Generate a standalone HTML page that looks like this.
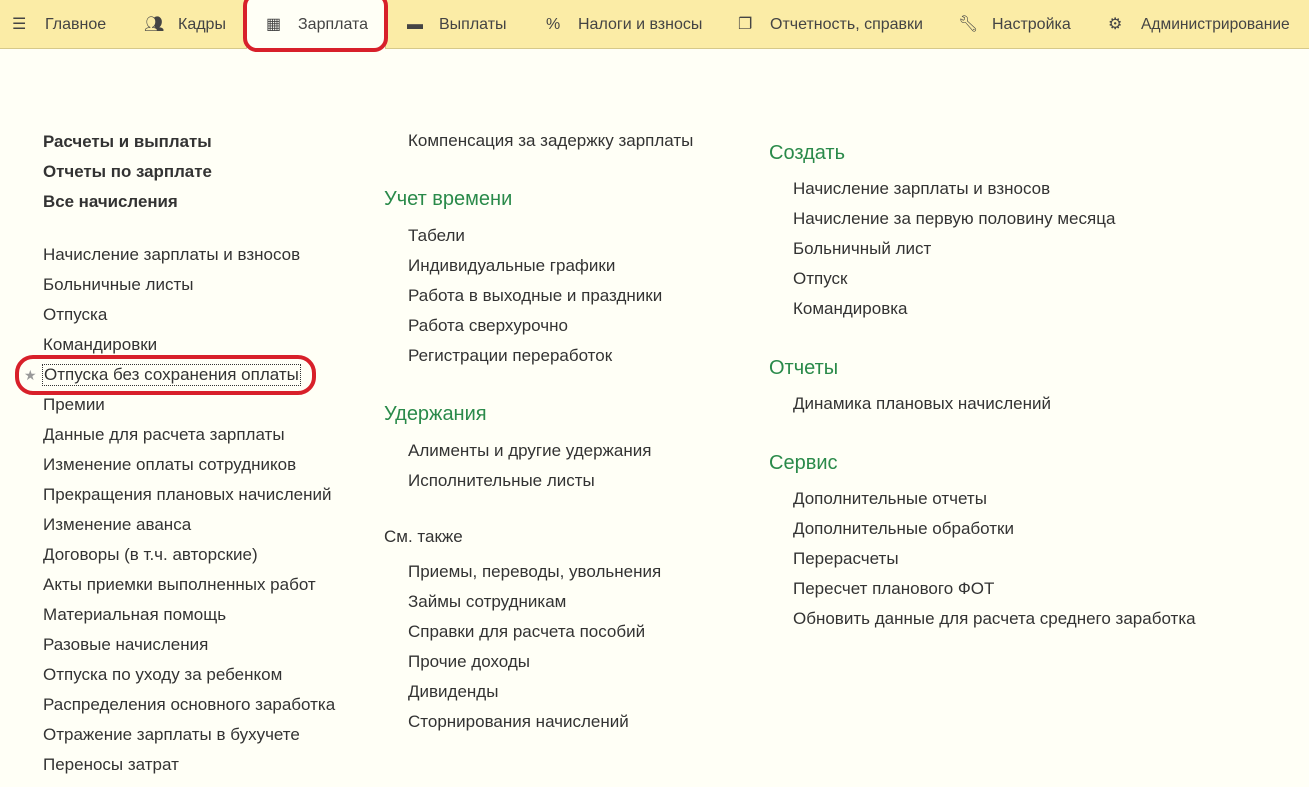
<!DOCTYPE html>
<html><head><meta charset="utf-8"><style>
body{margin:0;width:1309px;height:787px;background:#fffff6;font-family:"Liberation Sans",sans-serif;color:#333;overflow:hidden;position:relative}
.bar{position:absolute;left:0;top:0;width:1309px;height:48px;background:#fbeca6;border-bottom:1px solid #d6c98a}
.tab{position:absolute;top:1px;height:48px;line-height:48px;font-size:16px;color:#444}
.sel{position:absolute;left:246px;top:0;width:138px;height:49px;background:#fffff6;border-left:1px solid #d6c98a;border-right:1px solid #d6c98a}
.redbox{position:absolute;border:4px solid #d8202a;border-radius:14px}
.t{position:absolute;font-size:17px;white-space:nowrap;color:#333}
.b{font-weight:bold;font-size:16.9px}
.g{position:absolute;font-size:20px;color:#2a8a4a;white-space:nowrap}
</style></head><body>
<div class="bar"></div>
<div class="sel"></div>
<div class="redbox" style="left:243px;top:-8px;width:137px;height:52px"></div>
<div class="tab" style="left:12px">☰</div><div class="tab" style="left:45px">Главное</div>
<div class="tab" style="left:144px">👥︎</div><div class="tab" style="left:178px">Кадры</div>
<div class="tab" style="left:266px">▦</div><div class="tab" style="left:298px">Зарплата</div>
<div class="tab" style="left:407px">▬</div><div class="tab" style="left:439px">Выплаты</div>
<div class="tab" style="left:546px">%</div><div class="tab" style="left:578px">Налоги и взносы</div>
<div class="tab" style="left:738px">❐</div><div class="tab" style="left:770px">Отчетность, справки</div>
<div class="tab" style="left:958px">🔧︎</div><div class="tab" style="left:992px">Настройка</div>
<div class="tab" style="left:1108px">⚙</div><div class="tab" style="left:1141px;font-size:15.6px">Администрирование</div>

<div class="t b" style="left:43px;top:132px">Расчеты и выплаты</div>
<div class="t b" style="left:43px;top:162px">Отчеты по зарплате</div>
<div class="t b" style="left:43px;top:192px">Все начисления</div>
<div class="t" style="left:43px;top:245px">Начисление зарплаты и взносов</div>
<div class="t" style="left:43px;top:275px">Больничные листы</div>
<div class="t" style="left:43px;top:305px">Отпуска</div>
<div class="t" style="left:43px;top:335px">Командировки</div>
<div class="t" style="left:24px;top:367px;color:#999;font-size:14px">★</div>
<div class="t" style="left:42px;top:364px;border:1px dotted #333;padding:0 1px">Отпуска без сохранения оплаты</div>
<div class="redbox" style="left:15px;top:355px;width:293px;height:32px;border-radius:18px"></div>
<div class="t" style="left:43px;top:395px">Премии</div>
<div class="t" style="left:43px;top:425px">Данные для расчета зарплаты</div>
<div class="t" style="left:43px;top:455px">Изменение оплаты сотрудников</div>
<div class="t" style="left:43px;top:485px">Прекращения плановых начислений</div>
<div class="t" style="left:43px;top:515px">Изменение аванса</div>
<div class="t" style="left:43px;top:545px">Договоры (в т.ч. авторские)</div>
<div class="t" style="left:43px;top:575px">Акты приемки выполненных работ</div>
<div class="t" style="left:43px;top:605px">Материальная помощь</div>
<div class="t" style="left:43px;top:635px">Разовые начисления</div>
<div class="t" style="left:43px;top:665px">Отпуска по уходу за ребенком</div>
<div class="t" style="left:43px;top:695px">Распределения основного заработка</div>
<div class="t" style="left:43px;top:725px">Отражение зарплаты в бухучете</div>
<div class="t" style="left:43px;top:755px">Переносы затрат</div>

<div class="t" style="left:408px;top:131px">Компенсация за задержку зарплаты</div>
<div class="g" style="left:384px;top:188px">Учет времени</div>
<div class="t" style="left:408px;top:226px">Табели</div>
<div class="t" style="left:408px;top:256px">Индивидуальные графики</div>
<div class="t" style="left:408px;top:286px">Работа в выходные и праздники</div>
<div class="t" style="left:408px;top:316px">Работа сверхурочно</div>
<div class="t" style="left:408px;top:346px">Регистрации переработок</div>
<div class="g" style="left:384px;top:403px">Удержания</div>
<div class="t" style="left:408px;top:441px">Алименты и другие удержания</div>
<div class="t" style="left:408px;top:471px">Исполнительные листы</div>
<div class="t" style="left:384px;top:527px">См. также</div>
<div class="t" style="left:408px;top:562px">Приемы, переводы, увольнения</div>
<div class="t" style="left:408px;top:592px">Займы сотрудникам</div>
<div class="t" style="left:408px;top:622px">Справки для расчета пособий</div>
<div class="t" style="left:408px;top:652px">Прочие доходы</div>
<div class="t" style="left:408px;top:682px">Дивиденды</div>
<div class="t" style="left:408px;top:712px">Сторнирования начислений</div>

<div class="g" style="left:769px;top:142px">Создать</div>
<div class="t" style="left:793px;top:179px">Начисление зарплаты и взносов</div>
<div class="t" style="left:793px;top:209px">Начисление за первую половину месяца</div>
<div class="t" style="left:793px;top:239px">Больничный лист</div>
<div class="t" style="left:793px;top:269px">Отпуск</div>
<div class="t" style="left:793px;top:299px">Командировка</div>
<div class="g" style="left:769px;top:357px">Отчеты</div>
<div class="t" style="left:793px;top:394px">Динамика плановых начислений</div>
<div class="g" style="left:769px;top:452px">Сервис</div>
<div class="t" style="left:793px;top:489px">Дополнительные отчеты</div>
<div class="t" style="left:793px;top:519px">Дополнительные обработки</div>
<div class="t" style="left:793px;top:549px">Перерасчеты</div>
<div class="t" style="left:793px;top:579px">Пересчет планового ФОТ</div>
<div class="t" style="left:793px;top:609px">Обновить данные для расчета среднего заработка</div>
</body></html>
